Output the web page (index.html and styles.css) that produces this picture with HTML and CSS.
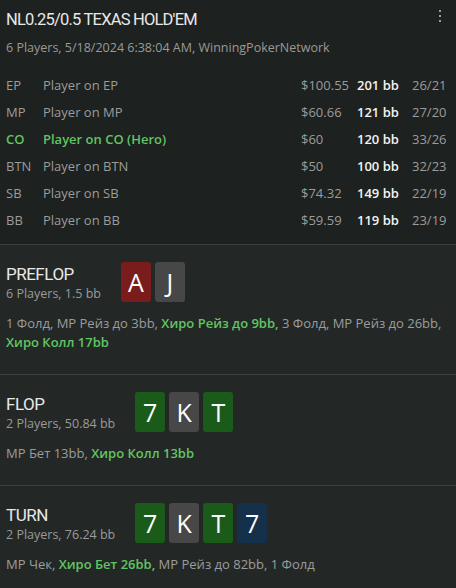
FILE: index.html
```html
<!DOCTYPE html>
<html lang="ru">
  <head>
    <meta charset="UTF-8" />
    <meta name="viewport" content="width=device-width, initial-scale=1.0" />
    <title>Hand History</title>
    <link rel="stylesheet" href="styles.css">
  </head>
  <body>
    <!-- Hand info -->
    <section class="info">
      <div class="info-head">
        <div>
          <h1>NL0.25/0.5 TEXAS HOLD'EM</h1>
          <p class="sub">6 Players, 5/18/2024 6:38:04 AM, WinningPokerNetwork</p>
        </div>
        <button class="menu" type="button" aria-label="Menu">
          <svg width="4" height="14" viewBox="0 0 4 14">
            <rect x="1" y="1" width="2" height="2" fill="#9a9a9a" />
            <rect x="1" y="6" width="2" height="2" fill="#9a9a9a" />
            <rect x="1" y="11" width="2" height="2" fill="#9a9a9a" />
          </svg>
        </button>
      </div>

      <div class="players">
        <div class="row"><span>EP</span><span>Player on EP</span><span>$100.55</span><b>201 bb</b><span>26/21</span></div>
        <div class="row"><span>MP</span><span>Player on MP</span><span>$60.66</span><b>121 bb</b><span>27/20</span></div>
        <div class="row hero"><span class="pos">CO</span><span class="name">Player on CO (Hero)</span><span>$60</span><b>120 bb</b><span>33/26</span></div>
        <div class="row"><span>BTN</span><span>Player on BTN</span><span>$50</span><b>100 bb</b><span>32/23</span></div>
        <div class="row"><span>SB</span><span>Player on SB</span><span>$74.32</span><b>149 bb</b><span>22/19</span></div>
        <div class="row"><span>BB</span><span>Player on BB</span><span>$59.59</span><b>119 bb</b><span>23/19</span></div>
      </div>
    </section>

    <!-- Streets -->
    <section class="street">
      <div class="street-head">
        <div class="street-title">
          <h2>PREFLOP</h2>
          <p class="sub">6 Players, 1.5 bb</p>
        </div>
        <div class="cards">
          <span class="card red">A</span>
          <span class="card grey">J</span>
        </div>
      </div>
      <p class="actions">1 Фолд, MP Рейз до 3bb, <b>Хиро Рейз до 9bb,</b> 3 Фолд, MP Рейз до 26bb, <b>Хиро Колл 17bb</b></p>
    </section>

    <section class="street">
      <div class="street-head">
        <div class="street-title">
          <h2>FLOP</h2>
          <p class="sub">2 Players, 50.84 bb</p>
        </div>
        <div class="cards">
          <span class="card green">7</span>
          <span class="card grey">K</span>
          <span class="card green">T</span>
        </div>
      </div>
      <p class="actions">MP Бет 13bb, <b>Хиро Колл 13bb</b></p>
    </section>

    <section class="street">
      <div class="street-head">
        <div class="street-title">
          <h2>TURN</h2>
          <p class="sub">2 Players, 76.24 bb</p>
        </div>
        <div class="cards">
          <span class="card green">7</span>
          <span class="card grey">K</span>
          <span class="card green">T</span>
          <span class="card blue">7</span>
        </div>
      </div>
      <p class="actions">MP Чек, <b>Хиро Бет 26bb,</b> MP Рейз до 82bb, 1 Фолд</p>
    </section>
  </body>
</html>
```

FILE: styles.css
```css
/* General */
body {
  margin: 0;
  background: #232827;
  color: #9c9c9c;
  font-family: "Open Sans", "Noto Sans", sans-serif;
  font-size: 13px;
}

h1,
h2,
p {
  margin: 0;
}

.sub {
  font-size: 12.5px;
  line-height: 17px;
  color: #9a9a9a;
}

/* Hand info */
.info {
  background: #1d211f;
  padding: 8px 0 11px 6px;
  border-bottom: 1px solid #3b403d;
}

.info-head {
  display: flex;
  justify-content: space-between;
  align-items: flex-start;
}

.info h1 {
  font-family: Roboto, sans-serif;
  font-size: 16.5px;
  font-weight: 400;
  line-height: 24px;
  letter-spacing: -0.8px;
  color: #e8e8e8;
}

.info .sub {
  margin-top: 7px;
}

.menu {
  background: none;
  border: none;
  padding: 0;
  margin: 1px 14px 0 0;
  cursor: pointer;
}

.players {
  margin-top: 15px;
}

.row {
  display: grid;
  grid-template-columns: 37px 1fr 56px 55px 44px;
  height: 27px;
  align-items: center;
}

.row b {
  color: #f2f2f2;
  font-weight: 600;
}

.row.hero .pos,
.row.hero .name {
  color: #62c462;
  font-weight: 600;
}

/* Streets */
.street {
  padding: 17px 6px 22px;
  border-bottom: 1px solid #3b403d;
}

.street:last-child {
  border-bottom: none;
}

.street-head {
  display: flex;
  align-items: flex-end;
  gap: 20px;
}

.street h2 {
  font-family: Roboto, sans-serif;
  font-size: 17px;
  font-weight: 400;
  line-height: 23px;
  letter-spacing: -0.5px;
  color: #e8e8e8;
}

.street .sub {
  line-height: 16px;
}

.cards {
  display: flex;
  gap: 4px;
}

.card {
  width: 30px;
  height: 40px;
  border-radius: 3px;
  display: flex;
  align-items: center;
  justify-content: center;
  color: #fff;
  font-size: 25px;
}

.card.red {
  background: #7a1c1c;
}

.card.grey {
  background: #474747;
}

.card.green {
  background: #1a5b1a;
}

.card.blue {
  background: #14304b;
}

.actions {
  margin-top: 12px;
  line-height: 19px;
  color: #9c9c9c;
}

.actions b {
  color: #62c462;
  font-weight: 600;
}
```
